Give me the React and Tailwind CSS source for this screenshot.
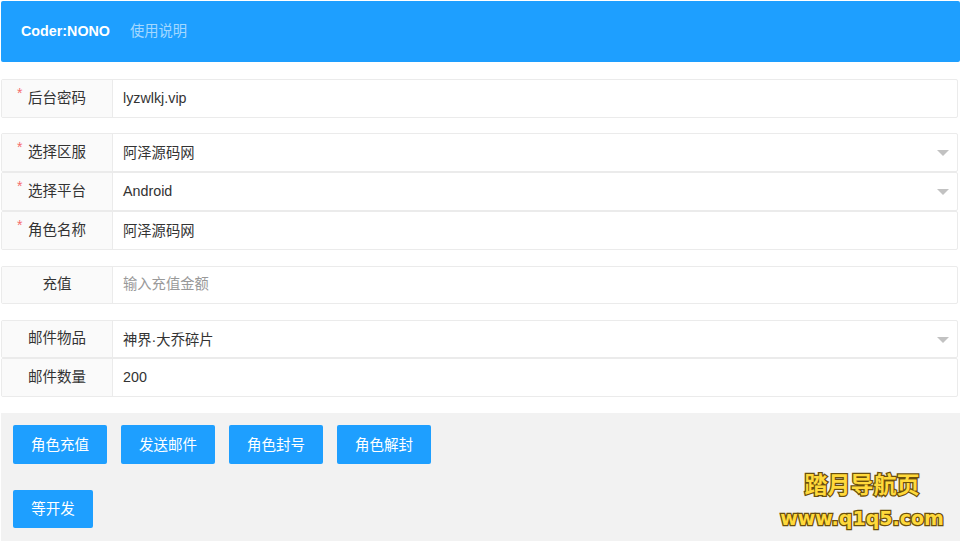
import React from "react";
import { useState } from "react";

const font = "font-['Liberation_Sans','Noto_Sans_CJK_SC',sans-serif]";

function Row({ label, required, value, placeholder, select, valueClass = "", className = "h-[39px]" }) {
  return (
    <div className={"flex border border-[#ebebeb] rounded-[2px] bg-white " + className}>
      <div className="relative w-[111px] shrink-0 bg-[#fafafa] border-r border-[#ebebeb] flex items-center justify-center text-[14.5px] text-[#333]">
        {required && <span className="absolute left-[15px] top-[6px] text-[#f56c6c] text-sm leading-none">*</span>}
        <span>{label}</span>
      </div>
      <div className="relative flex-1 flex items-center pl-[10px] text-[14.3px] text-[#333]">
        {value ? <span className={valueClass}>{value}</span> : <span className="text-[#999]">{placeholder}</span>}
        {select && (
          <span className="absolute right-[8px] top-[16px] w-0 h-0 border-x-[6px] border-x-transparent border-t-[6px] border-t-[#c2c2c2]" />
        )}
      </div>
    </div>
  );
}

function Btn({ children, className = "" }) {
  return (
    <button className={"pt-[2px] bg-[#1e9fff] text-white text-[14.5px] rounded-[2px] " + className}>
      {children}
    </button>
  );
}

export default function App() {
  const [items] = useState(["角色充值", "发送邮件", "角色封号", "角色解封"]);
  return (
    <div className={"relative h-[543px] overflow-hidden bg-white pt-px pl-px " + font}>
      <div className="h-[61px] bg-[#1e9fff] rounded-[2px] flex items-center pl-5 text-[14.3px]">
        <span className="font-bold text-white">Coder:NONO</span>
        <span className="ml-5 text-white/60">使用说明</span>
      </div>

      <div className="pr-[2px]">
        <Row className="h-[39px] mt-[17px]" required label="后台密码" value="lyzwlkj.vip" />

        <Row className="h-[39px] mt-[15px]" required label="选择区服" value="阿泽源码网" valueClass="pt-[2px]" select />
        <Row required label="选择平台" value="Android" select />
        <Row required label="角色名称" value="阿泽源码网" valueClass="pt-[2px]" />

        <Row className="h-[38px] mt-[16px]" label="充值" placeholder="输入充值金额" />

        <Row className="h-[38px] mt-[16px]" label="邮件物品" value="神界·大乔碎片" valueClass="pt-[3px]" select />
        <Row label="邮件数量" value="200" />
      </div>

      <div className="mt-[16px] h-[128px] bg-[#f2f2f2] pt-[12px] pl-3">
        <div className="flex gap-[14px]">
          {items.map((t) => (
            <Btn key={t} className="h-[39px] w-[94px]">{t}</Btn>
          ))}
        </div>
        <Btn className="mt-[26px] h-[38px] w-[80px]">等开发</Btn>
      </div>

      <div className="absolute left-[779px] top-[471px] w-[166px] flex flex-col items-center font-bold text-[#ffd93b] [paint-order:stroke] [-webkit-text-stroke:2.5px_#6b4f0c]">
        <span className="text-[23px] leading-[28px]">踏月导航页</span>
        <span className="text-[19px] leading-[26px] mt-[6px] font-['DejaVu_Sans',sans-serif]">www.q1q5.com</span>
      </div>
    </div>
  );
}
